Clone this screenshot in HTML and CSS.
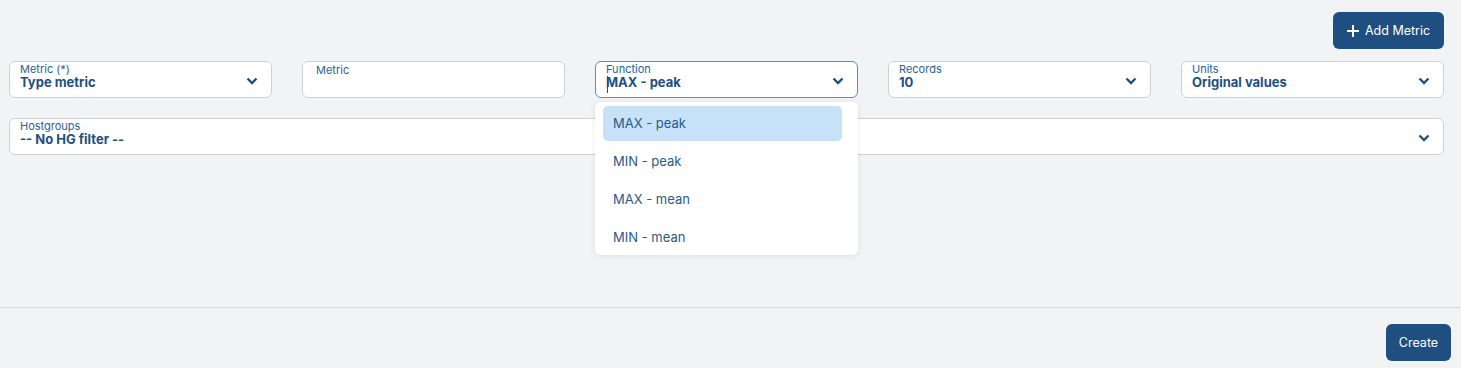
FILE: index.html
```html
<!DOCTYPE html>
<html lang="en">
<head>
  <meta charset="UTF-8" />
  <title>Add Metric</title>
  <link rel="stylesheet" href="styles.css">
</head>
<body>
<div class="page">

  <div class="main">
    <div class="toolbar">
      <button class="btn btn-add">
        <svg width="14" height="14" viewBox="0 0 14 14"><path d="M7 1v12M1 7h12" stroke="#fff" stroke-width="2" fill="none"/></svg>
        Add Metric
      </button>
    </div>

    <!-- metric fields -->
    <div class="fields">
      <div class="field">
        <span class="label">Metric (*)</span>
        <span class="value">Type metric</span>
        <svg class="chevron" viewBox="0 0 12 8"><path d="M1.5 1.5l4.5 4.5 4.5-4.5" /></svg>
      </div>
      <div class="field field-input">
        <span class="label">Metric</span>
      </div>
      <div class="field field-focus">
        <span class="label">Function</span>
        <span class="value"><i class="caret"></i>MAX - peak</span>
        <svg class="chevron" viewBox="0 0 12 8"><path d="M1.5 1.5l4.5 4.5 4.5-4.5" /></svg>
        <ul class="menu">
          <li class="active">MAX - peak</li>
          <li>MIN - peak</li>
          <li>MAX - mean</li>
          <li>MIN - mean</li>
        </ul>
      </div>
      <div class="field">
        <span class="label">Records</span>
        <span class="value">10</span>
        <svg class="chevron" viewBox="0 0 12 8"><path d="M1.5 1.5l4.5 4.5 4.5-4.5" /></svg>
      </div>
      <div class="field">
        <span class="label">Units</span>
        <span class="value">Original values</span>
        <svg class="chevron" viewBox="0 0 12 8"><path d="M1.5 1.5l4.5 4.5 4.5-4.5" /></svg>
      </div>
    </div>

    <div class="field field-wide">
      <span class="label">Hostgroups</span>
      <span class="value">-- No HG filter --</span>
      <svg class="chevron" viewBox="0 0 12 8"><path d="M1.5 1.5l4.5 4.5 4.5-4.5" /></svg>
    </div>
  </div>

  <div class="footer">
    <button class="btn btn-create">Create</button>
  </div>

</div>
</body>
</html>
```

FILE: styles.css
```css
body {
  margin: 0;
  background: #f2f3f5;
  font-family: 'Inter', 'Liberation Sans', sans-serif;
  color: #1f4f7f;
}

.page {
  height: 368px;
  display: flex;
  flex-direction: column;
}

.main {
  height: 307px;
  padding: 12px 17px 0 9px;
  box-sizing: border-box;
}

/* buttons */
.btn {
  background: #1e4f80;
  color: #fff;
  border: none;
  border-radius: 6px;
  height: 37px;
  font-family: inherit;
  font-size: 12.5px;
  display: flex;
  align-items: center;
}

.toolbar {
  display: flex;
  justify-content: flex-end;
}

.btn-add {
  width: 111px;
  padding: 0 0 0 13px;
  gap: 5px;
}

/* fields */
.fields {
  display: grid;
  grid-template-columns: repeat(5, 1fr);
  gap: 30px;
  margin-top: 12px;
}

.field {
  position: relative;
  height: 37px;
  box-sizing: border-box;
  background: #fff;
  border: 1px solid #cdd0d4;
  border-radius: 6px;
  padding: 2px 10px 0 10px;
  display: flex;
  flex-direction: column;
}

.field-input {
  padding-left: 13px;
  padding-top: 3px;
}

.field-focus {
  border-color: #4a8fe0;
}

.field-wide {
  margin-top: 20px;
}

.label {
  font-size: 11px;
  line-height: 11px;
  color: #2d6194;
}

.value {
  font-size: 13px;
  line-height: 15px;
  font-weight: 700;
  color: #1f4f7f;
  position: relative;
}

.caret {
  position: absolute;
  left: 1px;
  top: 1px;
  width: 1px;
  height: 17px;
  background: #1f4f7f;
}

.chevron {
  position: absolute;
  right: 13px;
  top: 15px;
  width: 12px;
  height: 8px;
  fill: none;
  stroke: #1f4f7f;
  stroke-width: 2.4;
}

/* dropdown */
.menu {
  position: absolute;
  top: 40px;
  left: -1px;
  width: 263px;
  box-sizing: border-box;
  margin: 0;
  padding: 4px 16px 0 8px;
  height: 153px;
  list-style: none;
  background: #fff;
  border-radius: 6px;
  box-shadow: 0 1px 6px rgba(0, 0, 0, 0.08);
  z-index: 10;
}

.menu li {
  height: 35px;
  line-height: 35px;
  margin-bottom: 3px;
  padding-left: 10px;
  font-size: 13px;
  color: #2b5a86;
  border-radius: 5px;
}

.menu li.active {
  background: #c7e2f8;
}

/* footer */
.footer {
  flex: 1;
  border-top: 1px solid #d8dadd;
  display: flex;
  justify-content: flex-end;
  align-items: flex-start;
  padding: 16px 10px 0 0;
}

.btn-create {
  width: 65px;
  justify-content: center;
}
```
